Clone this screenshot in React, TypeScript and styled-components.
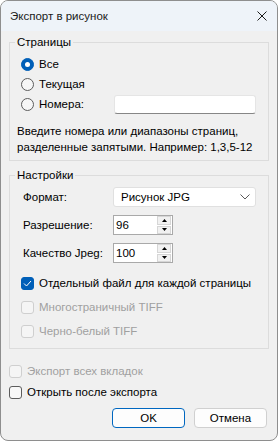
import React from "react";
import styled, { createGlobalStyle } from "styled-components";

const GlobalStyle = createGlobalStyle`
  html, body {
    margin: 0;
    padding: 0;
    background: #ffffff;
  }
  body {
    font-family: "Liberation Sans", Arial, sans-serif;
    font-size: 11.5px;
    line-height: 16px;
    color: #000000;
  }
`;

const Window = styled.div`
  width: 278px;
  height: 441px;
  box-sizing: border-box;
  border: 1px solid #8e8e8e;
  border-radius: 8px;
  overflow: hidden;
  background: #f0f0f0;
  display: flex;
  flex-direction: column;
`;

const TitleBar = styled.div`
  height: 30px;
  flex-shrink: 0;
  display: flex;
  align-items: center;
  justify-content: space-between;
  padding: 0 10px 0 9px;
  background: #eef3f9;
`;

const Title = styled.span`
  color: #1a1a1a;
`;

const Body = styled.div`
  flex: 1;
  display: flex;
  flex-direction: column;
  padding: 3px 8px 12px 8px;
`;

const Group = styled.fieldset<{ $gap?: number }>`
  margin: ${p => p.$gap || 0}px 0 0 0;
  padding: 0;
  border: 1px solid #dcdcdc;
  min-width: 0;
`;

const Legend = styled.legend`
  margin-left: 5px;
  padding: 0 2px;
  line-height: 16px;
`;

const GroupBody = styled.div<{ $bottom: number }>`
  display: flex;
  flex-direction: column;
  padding: 4px 11px ${p => p.$bottom}px 11px;
`;

const OptionRow = styled.label<{ $disabled?: boolean }>`
  height: 20px;
  display: flex;
  align-items: center;
  gap: 5px;
  color: ${p => (p.$disabled ? "#a0a0a0" : "#000000")};
`;

const RadioMark = styled.span<{ $checked?: boolean }>`
  width: 13px;
  height: 13px;
  box-sizing: border-box;
  border-radius: 50%;
  flex-shrink: 0;
  display: flex;
  align-items: center;
  justify-content: center;
  background: ${p => (p.$checked ? "#005fb8" : "#f6f6f6")};
  border: 1px solid ${p => (p.$checked ? "#005fb8" : "#5c5c5c")};

  &::after {
    content: "";
    display: ${p => (p.$checked ? "block" : "none")};
    width: 5px;
    height: 5px;
    border-radius: 50%;
    background: #ffffff;
  }
`;

const CheckMark = styled.span<{ $checked?: boolean; $disabled?: boolean }>`
  width: 13px;
  height: 13px;
  box-sizing: border-box;
  border-radius: 3px;
  flex-shrink: 0;
  display: flex;
  align-items: center;
  justify-content: center;
  background: ${p => (p.$checked ? "#005fb8" : p.$disabled ? "#f5f5f5" : "#f8f8f8")};
  border: 1px solid
    ${p => (p.$checked ? "#005fb8" : p.$disabled ? "#cfcfcf" : "#5c5c5c")};
`;

const OptionText = styled.span<{ $width?: number }>`
  width: ${p => (p.$width ? `${p.$width}px` : "auto")};
  flex-shrink: 0;
  white-space: nowrap;
`;

const TextBox = styled.div`
  width: 142px;
  height: 19px;
  box-sizing: border-box;
  background: #ffffff;
  border: 1px solid #e5e5e5;
  border-bottom-color: #868686;
  border-radius: 3px;
`;

const Hint = styled.p`
  margin: 9px 0 0 -4px;
  line-height: 16px;
  white-space: nowrap;
`;

const FieldGrid = styled.div`
  display: grid;
  grid-template-columns: 92px 1fr;
  row-gap: 8px;
  align-items: center;
  margin-bottom: 10px;
`;

const FieldLabel = styled.span`
  padding-left: 2px;
`;

const Select = styled.div`
  width: 143px;
  height: 20px;
  box-sizing: border-box;
  display: flex;
  align-items: center;
  justify-content: space-between;
  padding: 0 5px 0 7px;
  background: #ffffff;
  border: 1px solid #e0e0e0;
  border-radius: 3px;
`;

const Spin = styled.div`
  width: 60px;
  height: 20px;
  box-sizing: border-box;
  display: flex;
  align-items: center;
  justify-content: space-between;
  padding: 0 1px 0 2px;
  background: #ffffff;
  border: 1px solid #a9a9a9;
`;

const SpinButtons = styled.div`
  width: 14px;
  height: 18px;
  display: flex;
  flex-direction: column;
  gap: 1px;
`;

const SpinButton = styled.div`
  flex: 1;
  display: flex;
  align-items: center;
  justify-content: center;
  background: #f1f1f1;
  border: 1px solid #d6d6d6;
  box-sizing: border-box;
`;

const Checks = styled.div`
  display: flex;
  flex-direction: column;
  gap: 4px;
`;

const Footer = styled.div`
  display: flex;
  flex-direction: column;
  gap: 1px;
  margin-top: 12px;
`;

const ButtonRow = styled.div`
  display: flex;
  justify-content: flex-end;
  gap: 9px;
  margin-top: 6px;
  padding-right: 2px;
`;

const Button = styled.button<{ $primary?: boolean }>`
  width: 73px;
  height: 20px;
  box-sizing: border-box;
  padding: 0;
  font-family: inherit;
  font-size: inherit;
  color: #000000;
  background: #fdfdfd;
  border: 1px solid ${p => (p.$primary ? "#0067c0" : "#d0d0d0")};
  border-radius: 4px;
`;

const CloseIcon = () => (
  <svg width="10" height="10" viewBox="0 0 10 10">
    <path d="M0.5 0.5 L9.5 9.5 M9.5 0.5 L0.5 9.5" stroke="#1a1a1a" strokeWidth="1" />
  </svg>
);

const Chevron = () => (
  <svg width="10" height="6" viewBox="0 0 10 6">
    <path d="M0.5 0.5 L5 5 L9.5 0.5" fill="none" stroke="#5a5a5a" strokeWidth="1" />
  </svg>
);

const Tick = () => (
  <svg width="9" height="7" viewBox="0 0 9 7">
    <path d="M1 3.5 L3.5 6 L8 1" fill="none" stroke="#ffffff" strokeWidth="1" />
  </svg>
);

const Arrow: React.FC<{ down?: boolean }> = ({ down }) => (
  <svg width="5" height="3" viewBox="0 0 5 3">
    <path d={down ? "M0 0 L5 0 L2.5 3 Z" : "M0 3 L5 3 L2.5 0 Z"} fill="#000000" />
  </svg>
);

const Radio: React.FC<{ text: string; checked?: boolean; width?: number; children?: React.ReactNode }> = ({
  text,
  checked,
  width,
  children
}) => (
  <OptionRow>
    <RadioMark $checked={checked} />
    <OptionText $width={width}>{text}</OptionText>
    {children}
  </OptionRow>
);

const Check: React.FC<{ text: string; checked?: boolean; disabled?: boolean }> = ({
  text,
  checked,
  disabled
}) => (
  <OptionRow $disabled={disabled}>
    <CheckMark $checked={checked} $disabled={disabled}>
      {checked && <Tick />}
    </CheckMark>
    <OptionText>{text}</OptionText>
  </OptionRow>
);

const SpinBox: React.FC<{ value: string }> = ({ value }) => (
  <Spin>
    <span>{value}</span>
    <SpinButtons>
      <SpinButton>
        <Arrow />
      </SpinButton>
      <SpinButton>
        <Arrow down />
      </SpinButton>
    </SpinButtons>
  </Spin>
);

const App: React.FC = () => {
  return (
    <>
      <GlobalStyle />
      <Window>
        <TitleBar>
          <Title>Экспорт в рисунок</Title>
          <CloseIcon />
        </TitleBar>
        <Body>
          <Group>
            <Legend>Страницы</Legend>
            <GroupBody $bottom={5}>
              <Radio text="Все" checked />
              <Radio text="Текущая" />
              <Radio text="Номера:" width={70}>
                <TextBox />
              </Radio>
              <Hint>
                Введите номера или диапазоны страниц,
                <br />
                разделенные запятыми. Например: 1,3,5-12
              </Hint>
            </GroupBody>
          </Group>

          <Group $gap={6}>
            <Legend>Настройки</Legend>
            <GroupBody $bottom={7}>
              <FieldGrid>
                <FieldLabel>Формат:</FieldLabel>
                <Select>
                  <span>Рисунок JPG</span>
                  <Chevron />
                </Select>
                <FieldLabel>Разрешение:</FieldLabel>
                <SpinBox value="96" />
                <FieldLabel>Качество Jpeg:</FieldLabel>
                <SpinBox value="100" />
              </FieldGrid>
              <Checks>
                <Check text="Отдельный файл для каждой страницы" checked />
                <Check text="Многостраничный TIFF" disabled />
                <Check text="Черно-белый TIFF" disabled />
              </Checks>
            </GroupBody>
          </Group>

          <Footer>
            <Check text="Экспорт всех вкладок" disabled />
            <Check text="Открыть после экспорта" />
          </Footer>

          <ButtonRow>
            <Button $primary>OK</Button>
            <Button>Отмена</Button>
          </ButtonRow>
        </Body>
      </Window>
    </>
  );
};

export default App;
